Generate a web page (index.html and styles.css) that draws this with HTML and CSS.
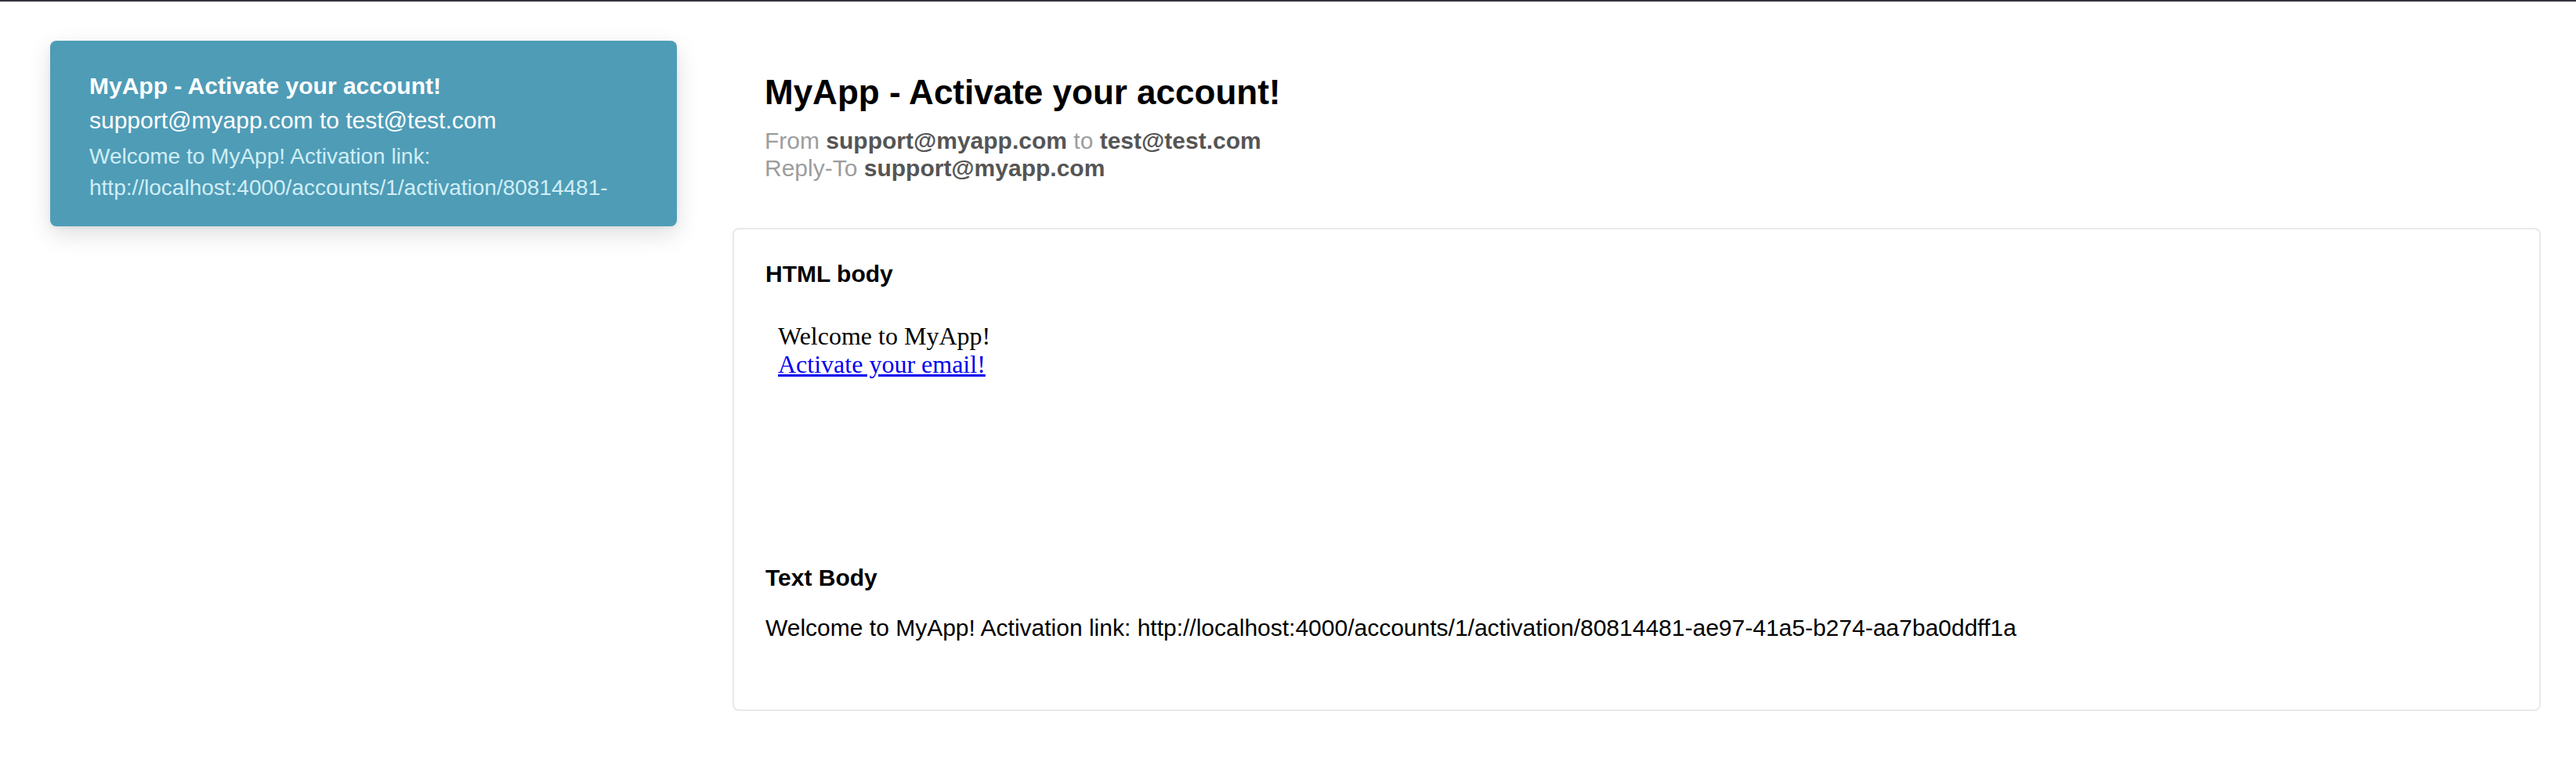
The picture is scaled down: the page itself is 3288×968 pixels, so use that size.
FILE: index.html
```html
<!DOCTYPE html>
<html lang="en">
<head>
<meta charset="utf-8">
<title>MyApp - Activate your account!</title>
<link rel="stylesheet" href="styles.css">
</head>
<body>
<div class="topbar"></div>
<div class="layout">
  <aside class="sidebar">
    <div class="card">
      <div class="card-subject">MyApp - Activate your account!</div>
      <div class="card-addr">support@myapp.com to test@test.com</div>
      <div class="card-preview">Welcome to MyApp! Activation link: http://localhost:4000/accounts/1/activation/80814481-ae97-41a5-b274-aa7ba0ddff1a</div>
    </div>
  </aside>
  <main class="detail">
    <header class="detail-head">
      <h1 class="subject">MyApp - Activate your account!</h1>
      <div class="meta"><span class="lbl">From</span> <b>support@myapp.com</b> <span class="lbl">to</span> <b>test@test.com</b></div>
      <div class="meta"><span class="lbl">Reply-To</span> <b>support@myapp.com</b></div>
    </header>
    <section class="bodies">
      <h3 class="body-title">HTML body</h3>
      <div class="html-frame">
        <p class="html-content">Welcome to MyApp!<br><a href="#" class="html-link">Activate your email!</a></p>
      </div>
      <h3 class="body-title">Text Body</h3>
      <p class="text-body">Welcome to MyApp! Activation link: http://localhost:4000/accounts/1/activation/80814481-ae97-41a5-b274-aa7ba0ddff1a</p>
    </section>
  </main>
</div>
</body>
</html>
```
FILE: styles.css
```css
html, body {
  margin: 0;
  padding: 0;
  background: #ffffff;
}
body {
  font-family: "Liberation Sans", Arial, Helvetica, sans-serif;
  color: #000;
}
.topbar {
  height: 2px;
  background: #34353f;
}
.layout {
  display: flex;
  align-items: flex-start;
  padding: 50px 45px 0 64px;
}
.sidebar {
  flex: none;
  width: 800px;
}
.card {
  background: #4f9cb7;
  border-radius: 8px;
  padding: 38px 50px 29px;
  color: #ffffff;
  box-shadow: 0 10px 30px rgba(0, 0, 0, 0.13), 0 2px 6px rgba(0, 0, 0, 0.05);
}
.card-subject {
  font-weight: 700;
  font-size: 30px;
  line-height: 40px;
}
.card-addr {
  font-size: 30px;
  line-height: 48px;
}
.card-preview {
  margin-top: 2px;
  font-size: 28px;
  line-height: 40px;
  max-height: 80px;
  overflow: hidden;
  color: #d0eef5;
}
.detail {
  flex: 1;
  min-width: 0;
  margin-left: 71px;
}
.detail-head {
  padding: 41px 41px 0;
}
.subject {
  margin: 0;
  font-size: 44px;
  line-height: 50px;
  font-weight: 700;
}
.meta {
  font-size: 30px;
  line-height: 35px;
  color: #555555;
}
.subject + .meta {
  margin-top: 19px;
}
.meta b {
  font-weight: 700;
}
.lbl {
  color: #9d9d9d;
}
.bodies {
  margin-top: 59px;
  border: 2px solid #e9e9e9;
  border-radius: 8px;
  padding: 40px;
}
.body-title {
  margin: 0;
  font-size: 30px;
  line-height: 34px;
  font-weight: 700;
}
.html-frame {
  margin: 28px 0;
  height: 298px;
  padding: 16px;
  box-sizing: border-box;
}
.html-content {
  margin: 0;
  font-family: "Liberation Serif", "Times New Roman", serif;
  font-size: 32px;
  line-height: 36px;
}
.html-link {
  color: #0000ee;
  text-decoration: underline;
}
.text-body {
  margin: 30px 0 47px;
  font-size: 30px;
  line-height: 34px;
}
```
